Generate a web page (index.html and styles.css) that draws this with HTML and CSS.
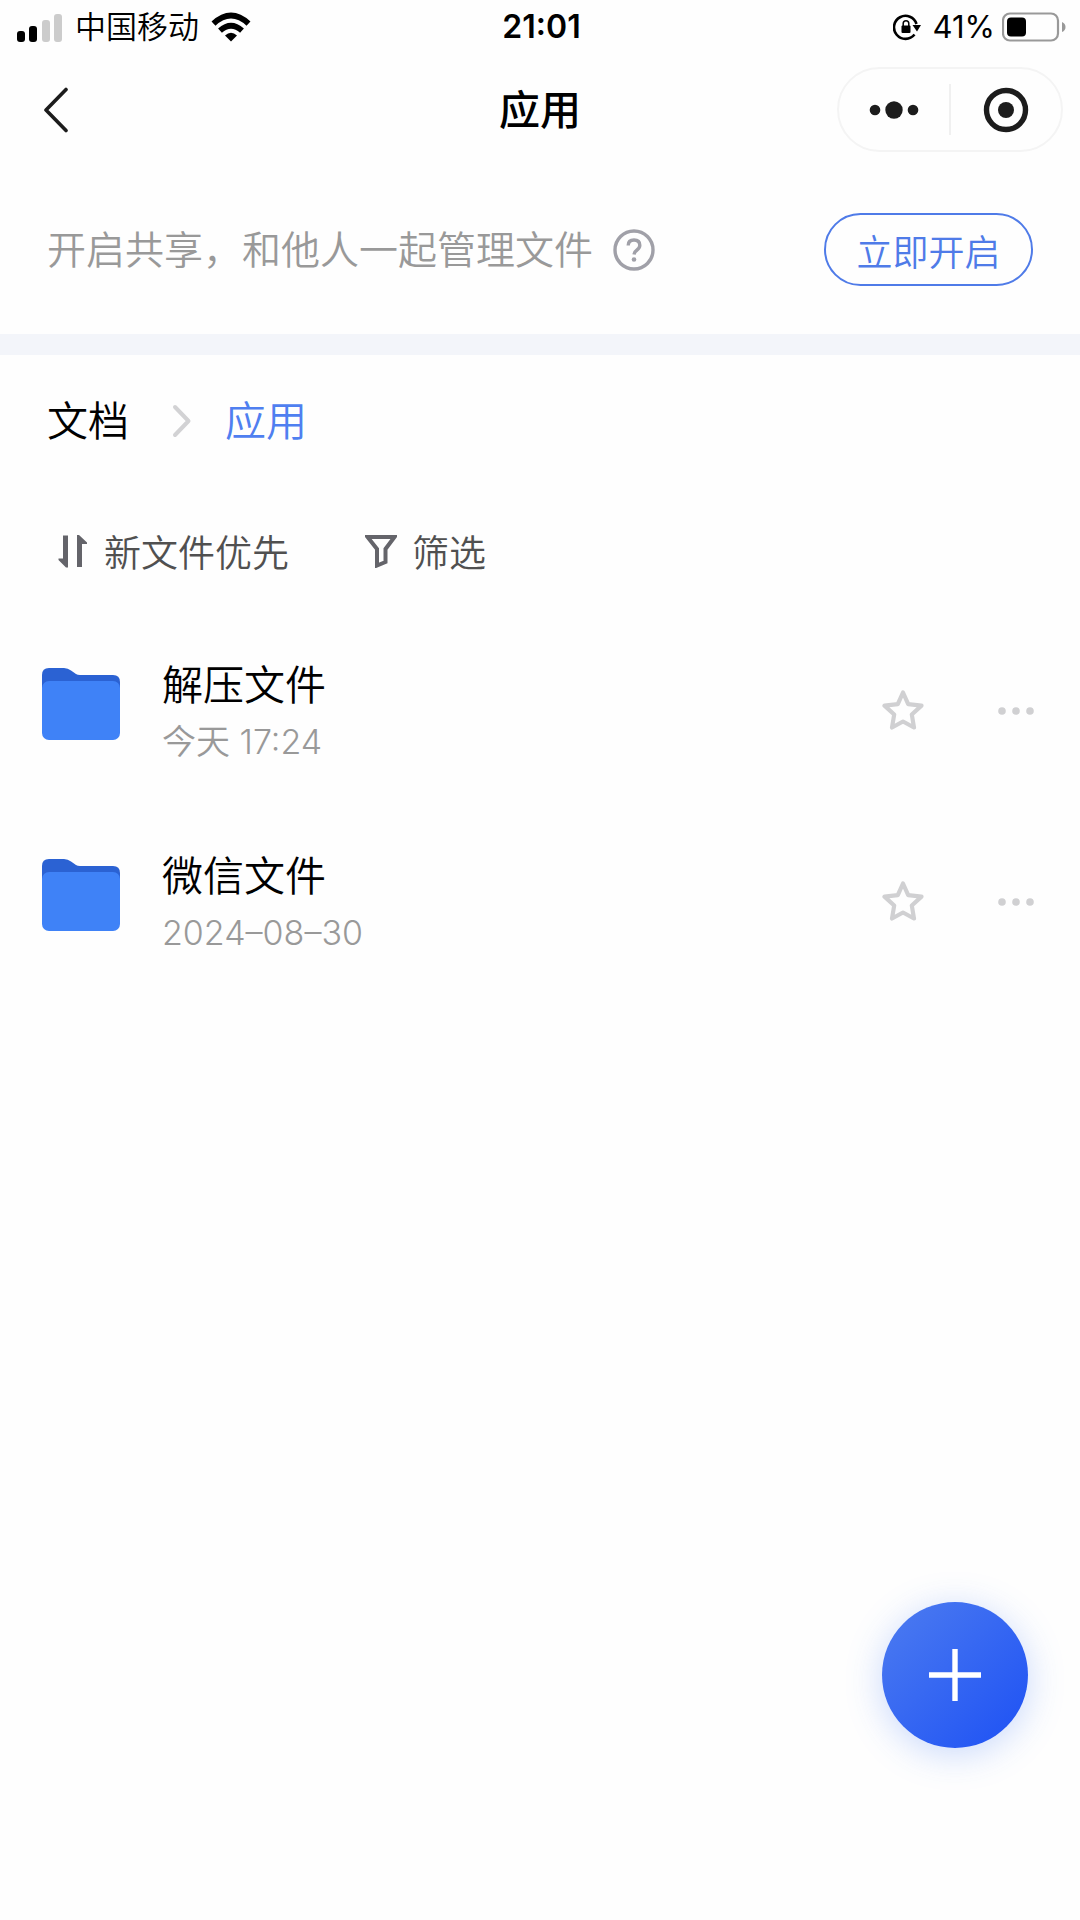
FILE: index.html
```html
<!DOCTYPE html>
<html lang="zh-CN">
<head>
<meta charset="utf-8">
<meta name="viewport" content="width=device-width, initial-scale=1">
<title>应用</title>
<link rel="stylesheet" href="styles.css">
</head>
<body>
<div class="status-bar">
  <div class="status-left">
    <svg class="icon-signal" viewBox="0 0 46 30" aria-hidden="true">
      <rect x="0" y="19" width="8" height="11" rx="3"/>
      <rect x="12" y="14" width="8" height="16" rx="3"/>
      <rect x="25" y="8" width="8" height="22" rx="3" fill="#ccc"/>
      <rect x="37" y="2" width="8" height="28" rx="3" fill="#ccc"/>
    </svg>
    <span class="carrier">中国移动</span>
    <svg class="icon-wifi" viewBox="0 0 40 30" aria-hidden="true">
      <path d="M20 29.500L14 23.500Q20 18 26 23.500Z"/>
      <path d="M9 18.600Q20 9 31 18.600M2.500 11.600Q20 -4.500 37.500 11.600" fill="none" stroke="#000" stroke-width="5.800"/>
    </svg>
  </div>
  <time class="clock">21:01</time>
  <div class="status-right">
    <svg class="icon-lock" viewBox="0 0 28 28" aria-hidden="true">
      <path d="M23.500 11A11.500 11.500 0 1 0 21.500 21.500" fill="none" stroke="#000" stroke-width="2.600"/>
      <path d="M19.500 12H28L24 18.500Z"/>
      <rect x="8.500" y="12.500" width="9" height="7.500" rx="1"/>
      <path d="M10.200 13V10.500a2.800 2.800 0 0 1 5.600 0V13" fill="none" stroke="#000" stroke-width="1.500"/>
    </svg>
    <span class="percent">41%</span>
    <svg class="icon-battery" viewBox="0 0 64 30" aria-hidden="true">
      <rect x="1" y="1.500" width="55" height="27" rx="7" fill="none" stroke="#999" stroke-width="2.200"/>
      <rect x="5" y="5.500" width="19" height="19" rx="4"/>
      <path d="M60 10q3.500 1.500 3.500 5t-3.500 5z" fill="#999"/>
    </svg>
  </div>
</div>

<header class="nav">
  <button class="back" type="button" aria-label="返回">
    <svg class="icon-back" viewBox="0 0 26 46"><path d="M23 2.500L3 23L23 43.500" fill="none" stroke="#1c1c1c" stroke-width="3.600" stroke-linecap="round" stroke-linejoin="round"/></svg>
  </button>
  <h1 class="title">应用</h1>
  <div class="capsule">
    <button class="capsule-button" type="button" aria-label="更多">
      <svg class="icon-more" viewBox="0 0 50 20" fill="#1c1c1c"><circle cx="6" cy="10" r="5.300"/><circle cx="25" cy="10" r="8.700"/><circle cx="44" cy="10" r="5.300"/></svg>
    </button>
    <button class="capsule-button" type="button" aria-label="关闭">
      <svg class="icon-close" viewBox="0 0 46 46"><circle cx="23" cy="23" r="19.500" fill="none" stroke="#1c1c1c" stroke-width="5.400"/><circle cx="23" cy="23" r="8" fill="#1c1c1c"/></svg>
    </button>
  </div>
</header>

<main>
  <section class="share">
    <p class="share-text">开启共享，和他人一起管理文件</p>
    <button class="help" type="button" aria-label="帮助">
      <svg class="icon-help" viewBox="0 0 42 42" fill="none" stroke="#a0a0a8" stroke-width="3.400"><circle cx="21" cy="21" r="19"/><path d="M15.200 16.500Q15.200 11 21 11T26.800 16.300Q26.800 19 24 21T21 25.500"/><circle cx="21" cy="30.500" r="2.300" fill="#a0a0a8" stroke="none"/></svg>
    </button>
    <button class="share-button" type="button">立即开启</button>
  </section>

  <nav class="crumbs" aria-label="路径">
    <a class="crumb" href="#docs">文档</a>
    <svg class="icon-chevron" viewBox="0 0 20 34" aria-hidden="true"><path d="M3 3L16.500 17L3 31" fill="none" stroke="#d2d2d4" stroke-width="4" stroke-linecap="round" stroke-linejoin="round"/></svg>
    <a class="crumb crumb-current" href="#apps" aria-current="page">应用</a>
  </nav>

  <div class="tools">
    <button class="tool" type="button">
      <svg class="icon-tool" viewBox="0 0 32 34"><path d="M6 1.500H11V33.500H9L1.500 26V24.500H6ZM20 33V1H22L30 8.500V10H25V33Z" fill="#64646a"/></svg>
      新文件优先
    </button>
    <button class="tool" type="button">
      <svg class="icon-tool" viewBox="0 0 32 34"><path d="M2.500 3H29.500L20.500 15V28L12 31.500V15Z" fill="none" stroke="#64646a" stroke-width="4"/></svg>
      筛选
    </button>
  </div>

  <ul class="files">
    <li class="file">
      <svg class="icon-folder" viewBox="0 0 78 72" aria-hidden="true"><path d="M0 7Q0 0 7 0H22Q26 0 29 2.500L34 6Q35.500 7 38 7H71Q78 7 78 14V40H0Z" fill="#2b62d3"/><rect y="13" width="78" height="59" rx="7" fill="#3f82f7"/></svg>
      <div class="file-text">
        <a class="file-name" href="#unzipped">解压文件</a>
        <span class="file-date">今天 17:24</span>
      </div>
      <button class="action" type="button" aria-label="收藏">
        <svg class="icon-star" viewBox="0 0 42 42"><path d="M21 2.500L26.200 14.200L39.500 15.600L29.800 24.500L32 37.500L21 31.500L10 37.500L12.200 24.500L2.500 15.600L15.800 14.200Z" fill="none" stroke="#d0d0d2" stroke-width="4.200" stroke-linejoin="round"/></svg>
      </button>
      <button class="action" type="button" aria-label="更多操作">
        <svg class="icon-dots" viewBox="0 0 36 10" fill="#d0d0d2"><circle cx="4" cy="5" r="3.800"/><circle cx="18" cy="5" r="3.800"/><circle cx="32" cy="5" r="3.800"/></svg>
      </button>
    </li>
    <li class="file">
      <svg class="icon-folder" viewBox="0 0 78 72" aria-hidden="true"><path d="M0 7Q0 0 7 0H22Q26 0 29 2.500L34 6Q35.500 7 38 7H71Q78 7 78 14V40H0Z" fill="#2b62d3"/><rect y="13" width="78" height="59" rx="7" fill="#3f82f7"/></svg>
      <div class="file-text">
        <a class="file-name" href="#wechat">微信文件</a>
        <span class="file-date">2024–08–30</span>
      </div>
      <button class="action" type="button" aria-label="收藏">
        <svg class="icon-star" viewBox="0 0 42 42"><path d="M21 2.500L26.200 14.200L39.500 15.600L29.800 24.500L32 37.500L21 31.500L10 37.500L12.200 24.500L2.500 15.600L15.800 14.200Z" fill="none" stroke="#d0d0d2" stroke-width="4.200" stroke-linejoin="round"/></svg>
      </button>
      <button class="action" type="button" aria-label="更多操作">
        <svg class="icon-dots" viewBox="0 0 36 10" fill="#d0d0d2"><circle cx="4" cy="5" r="3.800"/><circle cx="18" cy="5" r="3.800"/><circle cx="32" cy="5" r="3.800"/></svg>
      </button>
    </li>
  </ul>
</main>

<button class="add" type="button" aria-label="新建">
  <svg class="icon-plus" viewBox="0 0 52 52"><path d="M26 0V52M0 26H52" stroke="#fff" stroke-width="5.400"/></svg>
</button>
</body>
</html>
```
FILE: styles.css
```css
* {
  box-sizing: border-box;
}

body {
  margin: 0;
  background: #fefefe;
  color: #000;
  font-family: Inter, "Noto Sans CJK SC", sans-serif;
  font-size: 36px;
  font-weight: 350;
}

button {
  margin: 0;
  padding: 0;
  border: 0;
  background: none;
  color: inherit;
  font: inherit;
  cursor: pointer;
}

a {
  color: inherit;
  text-decoration: none;
}

svg {
  display: block;
  flex: none;
}

.status-bar,
.nav {
  display: grid;
  grid-template-columns: 1fr auto 1fr;
  align-items: center;
}

.status-bar {
  height: 54px;
  padding: 0 14px 0 17px;
  font-size: 31px;
  line-height: 40px;
}

.status-left,
.status-right {
  display: flex;
  align-items: center;
}

.status-left {
  gap: 12px;
}

.status-right {
  justify-content: flex-end;
  gap: 7px;
}

.percent {
  font-weight: 400;
}

.clock {
  font-size: 32px;
  font-weight: 600;
}

.icon-signal {
  width: 46px;
  height: 30px;
}

.icon-wifi {
  width: 40px;
  height: 30px;
}

.icon-lock {
  width: 28px;
  height: 28px;
  margin-right: 5px;
}

.icon-battery {
  width: 64px;
  height: 30px;
}

.nav {
  height: 111px;
  padding: 0 17px;
}

.back {
  justify-self: start;
  padding: 0 26px;
}

.icon-back {
  width: 26px;
  height: 46px;
}

.title {
  margin: 0;
  font-size: 41px;
  font-weight: 500;
  line-height: 56px;
}

.capsule {
  display: flex;
  justify-self: end;
  width: 226px;
  height: 85px;
  padding: 15px 0;
  border: 2px solid #f4f4f4;
  border-radius: 43px;
}

.capsule-button {
  display: flex;
  flex: 1;
  align-items: center;
  justify-content: center;
}

.capsule-button + .capsule-button {
  border-left: 2px solid #f0f0f0;
}

.icon-more {
  width: 50px;
  height: 20px;
}

.icon-close {
  width: 46px;
  height: 46px;
}

.share {
  display: flex;
  align-items: center;
  gap: 20px;
  height: 190px;
  padding: 0 47px;
  border-bottom: 21px solid #f3f5fa;
}

.share-text {
  margin: 0;
  color: #999;
  font-size: 39px;
  line-height: 56px;
}

.icon-help {
  width: 42px;
  height: 42px;
}

.share-button {
  width: 209px;
  height: 73px;
  margin-left: auto;
  border: 2px solid #4f7be8;
  border-radius: 37px;
  color: #4f7be8;
}

.crumbs {
  display: flex;
  align-items: center;
  gap: 43px;
  height: 131px;
  padding: 0 47px;
  font-size: 41px;
  line-height: 56px;
}

.crumb-current {
  margin-left: -10px;
  color: #4f7ff0;
}

.icon-chevron {
  width: 20px;
  height: 34px;
}

.tools {
  display: flex;
  align-items: center;
  gap: 76px;
  height: 129px;
  padding: 0 57px;
  color: #505050;
  font-size: 37px;
}

.tool {
  display: flex;
  align-items: center;
  gap: 15px;
}

.icon-tool {
  width: 32px;
  height: 34px;
}

.files {
  margin: 0;
  padding: 0;
  list-style: none;
}

.file {
  display: flex;
  align-items: center;
  height: 191px;
  padding: 0 46px 0 42px;
}

.icon-folder {
  width: 78px;
  height: 72px;
  margin-bottom: 14px;
}

.file-text {
  display: flex;
  flex: 1;
  flex-direction: column;
  margin-left: 42px;
  padding-top: 4px;
}

.file-name {
  font-size: 41px;
  line-height: 58px;
}

.file-date {
  color: #999;
  font-size: 34px;
  line-height: 56px;
}

.action {
  margin-left: 74px;
}

.icon-star {
  width: 42px;
  height: 42px;
}

.icon-dots {
  width: 36px;
  height: 10px;
}

.add {
  position: fixed;
  right: 52px;
  bottom: 172px;
  display: flex;
  align-items: center;
  justify-content: center;
  width: 146px;
  height: 146px;
  border-radius: 50%;
  background: linear-gradient(135deg, #4d7cf0 0%, #2255f4 90%);
  box-shadow: 0 6px 36px rgba(60, 120, 245, 0.28);
}

.icon-plus {
  width: 52px;
  height: 52px;
}
```
